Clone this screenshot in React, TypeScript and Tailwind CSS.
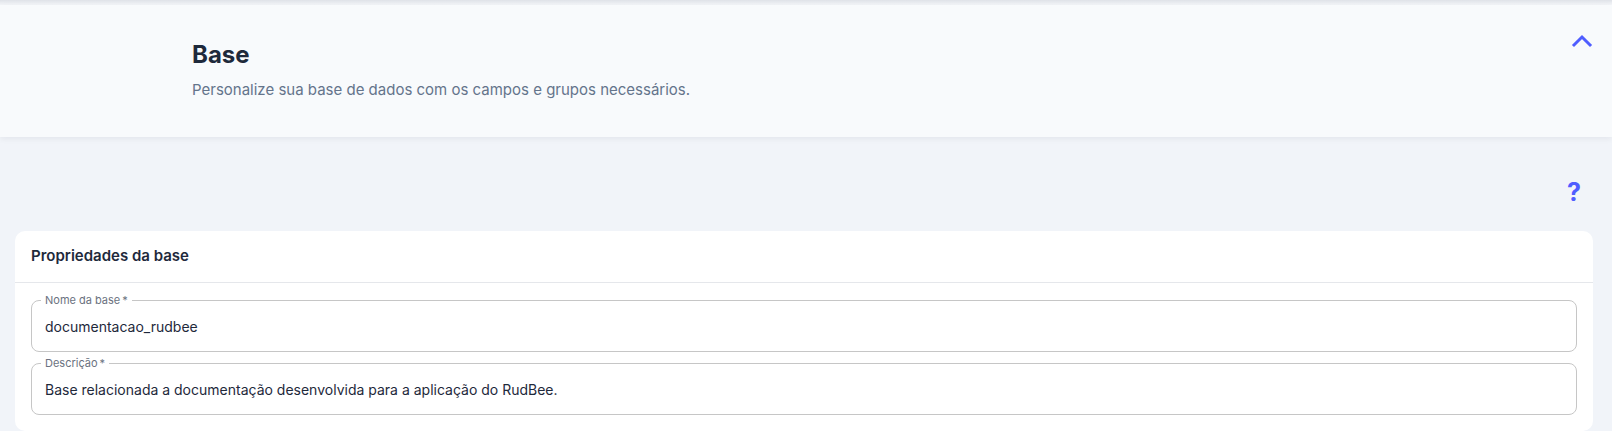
const fields = [
  { label: "Nome da base", value: "documentacao_rudbee" },
  { label: "Descrição", value: "Base relacionada a documentação desenvolvida para a aplicação do RudBee." },
];

function OutlinedField({ label, value }: { label: string; value: string }) {
  return (
    <div className="relative h-[52px] flex items-center rounded-[8px] border border-[#c6c6c6] pl-[13px]">
      <span className="absolute -top-[8px] left-[9px] bg-white px-[4px] text-[11px] leading-[14px] text-[#6b7280]">
        {label}
        <span className="ml-[2px]">*</span>
      </span>
      <span className="text-[14px] text-[#1e293b]">{value}</span>
    </div>
  );
}

export default function App() {
  return (
    <div className="min-h-screen bg-[#f1f4f9] font-['Inter',sans-serif]">
      <div className="h-[5px] bg-gradient-to-b from-[#dfe2e8] to-[#f4f6f9]" />
      <div className="flex justify-between bg-[#f8fafc] h-[132px] shadow-[0_2px_6px_rgba(15,23,42,0.06)]">
        <div className="pl-[192px] pt-[34px]">
          <h1 className="text-[24px] leading-8 font-bold text-[#1e293b]">Base</h1>
          <p className="mt-[8px] text-[15px] text-[#64748b]">
            Personalize sua base de dados com os campos e grupos necessários.
          </p>
        </div>
        <div className="pr-[19px] pt-[29px]">
          <svg width="22" height="14" viewBox="0 0 22 14" fill="none" stroke="#4f5dff" strokeWidth="3" strokeLinecap="square">
            <polyline points="3,11 11,3 19,11" />
          </svg>
        </div>
      </div>
      <div className="flex justify-end pr-[31px] pt-[43px] h-[94px]">
        <span className="text-[25px] leading-none font-bold text-[#4f5dff]">?</span>
      </div>
      <div className="ml-[15px] mr-[19px] rounded-[10px] bg-white">
        <div className="h-[52px] flex items-center px-[16px] border-b border-[#e5e7eb]">
          <h2 className="text-[15px] font-semibold text-[#1e293b]">Propriedades da base</h2>
        </div>
        <div className="flex flex-col gap-[11px] px-[16px] pt-[17px] pb-[16px]">
          {fields.map((f) => (
            <OutlinedField key={f.label} label={f.label} value={f.value} />
          ))}
        </div>
      </div>
    </div>
  );
}
